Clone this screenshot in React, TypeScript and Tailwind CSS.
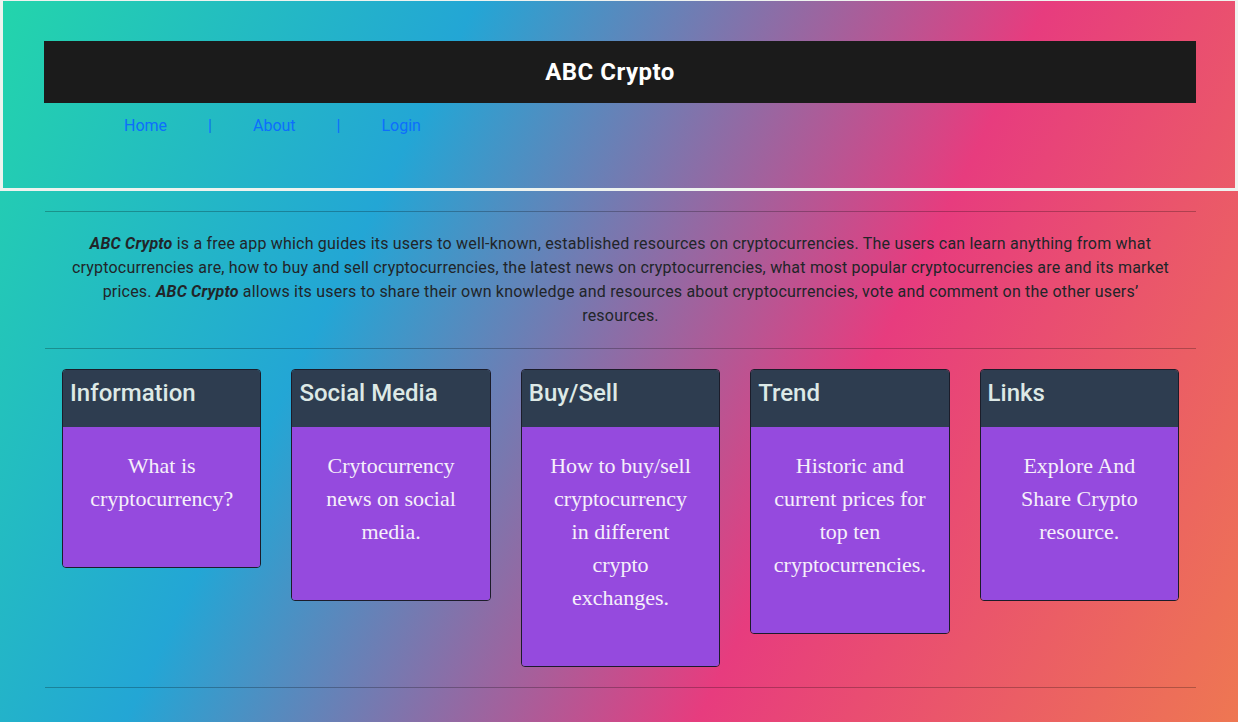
import React from "react"

const cards = [
  { title: "Information", text: "What is cryptocurrency?" },
  { title: "Social Media", text: "Crytocurrency news on social media." },
  { title: "Buy/Sell", text: "How to buy/sell cryptocurrency in different crypto exchanges." },
  { title: "Trend", text: "Historic and current prices for top ten cryptocurrencies." },
  { title: "Links", text: "Explore And Share Crypto resource." },
]

export default function App() {
  return (
    <div className="min-h-screen bg-[linear-gradient(116deg,#23d5ab_0%,#23a6d5_30%,#e73c7e_66%,#ee7752_100%)] font-['Roboto',sans-serif] text-[#212529]">
      <header className="border-[3px] border-t border-[#eef3ef] pl-[41px] pr-[39px] pt-[40px] pb-[50px]">
        <div className="flex h-[62px] items-center justify-center bg-[#1b1b1b] pr-5">
          <h1 className="text-[24px] font-bold tracking-[0.5px] text-white">ABC Crypto</h1>
        </div>
        <nav className="mt-[11px] flex items-center gap-[41px] pl-[80px] text-[16px] leading-6 text-[#0d6efd]">
          <a href="#">Home</a>
          <span>|</span>
          <a href="#">About</a>
          <span>|</span>
          <a href="#">Login</a>
        </nav>
      </header>

      <main className="ml-[45px] mr-[42px] pt-[20px]">
        <hr className="border-t border-black/25" />
        <p className="px-4 pt-[20px] pb-[20px] text-center text-[16px] leading-6 tracking-[0.2px]">
          <strong className="italic">ABC Crypto</strong> is a free app which guides its users to well-known,
          established resources on cryptocurrencies. The users can learn anything from what cryptocurrencies are,
          how to buy and sell cryptocurrencies, the latest news on cryptocurrencies, what most popular
          cryptocurrencies are and its market prices. <strong className="italic">ABC Crypto</strong> allows its
          users to share their own knowledge and resources about cryptocurrencies, vote and comment on the other
          users’
          <br />
          resources.
        </p>
        <hr className="border-t border-black/25" />

        <div className="grid grid-cols-5 items-start gap-[30px] px-[17px] pt-[20px]">
          {cards.map((c) => (
            <div key={c.title} className="overflow-hidden rounded-[4px] border border-[#1c1c2a]">
              <div className="h-[57px] bg-[#2e3d50] px-[7px] pt-[9px]">
                <h3 className="text-[24px] leading-[29px] font-medium text-[#dde9e6]">{c.title}</h3>
              </div>
              <div className="bg-[#954ade] px-[22px] pt-[22px] pb-[52px] text-center font-['Liberation_Serif',serif] text-[22px] leading-[33px] text-[#f5f0fa]">
                {c.text}
              </div>
            </div>
          ))}
        </div>

        <hr className="mt-[20px] border-t border-black/25" />
      </main>
    </div>
  )
}
